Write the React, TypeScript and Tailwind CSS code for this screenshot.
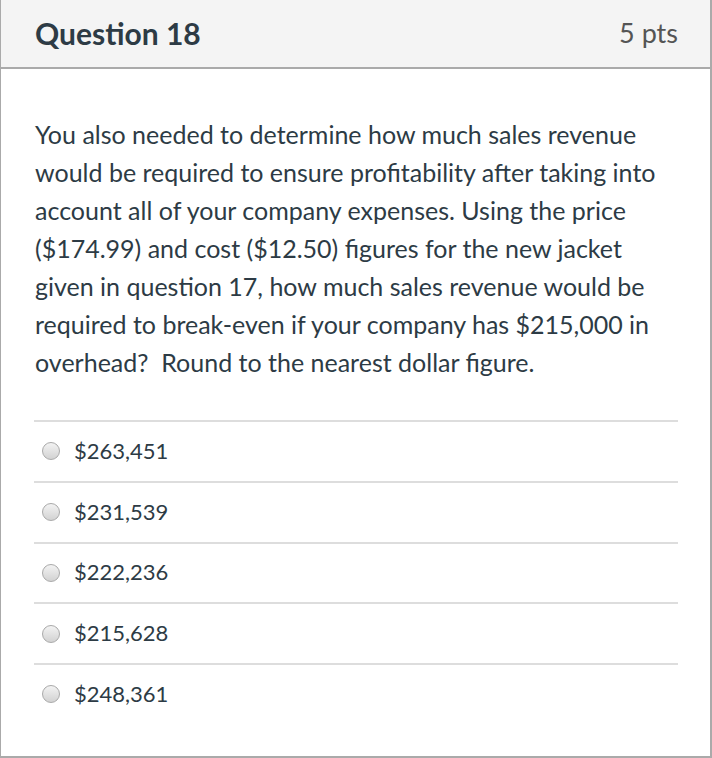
import React from "react";

const answers = ["$263,451", "$231,539", "$222,236", "$215,628", "$248,361"];

function Radio() {
  return (
    <span className="inline-block w-[18px] h-[18px] rounded-full border border-[#a9a9a9] bg-gradient-to-b from-[#f3f3f3] to-[#d2d2d2] shrink-0" />
  );
}

export default function App() {
  return (
    <div className="w-[712px] h-[758px] bg-white" style={{ fontFamily: "Lato, 'Open Sans', sans-serif" }}>
      <div className="w-[712px] h-[758px] border-l border-r-2 border-b-2 border-[#aaaaaa] flex flex-col">
        <div className="h-[69px] bg-[#f4f4f4] border-b-2 border-[#aaaaaa] flex items-center justify-between pl-[34px] pr-[32px] shrink-0">
          <div className="text-[30px] font-bold text-[#2d3b45] leading-none pb-[2px]">Question 18</div>
          <div className="text-[27px] text-[#555555] leading-none pb-[2px]">5 pts</div>
        </div>
        <div className="pl-[34px] pr-[32px] pt-[46px]">
          <p className="text-[25px] leading-[38px] text-[#2d3b45]">
            You also needed to determine how much sales revenue would be required to ensure profitability after taking into account all of your company expenses. Using the price ($174.99) and cost ($12.50) figures for the new jacket given in question 17, how much sales revenue would be required to break-even if your company has $215,000 in overhead?&nbsp; Round to the nearest dollar figure.
          </p>
          <div className="mt-[39px] -ml-[1px]">
            {answers.map((a) => (
              <div key={a} className="h-[60.75px] border-t-2 border-[#dddddd] flex items-center pl-[8px] gap-[14px]">
                <Radio />
                <span className="text-[22px] text-[#2d3b45] pb-[2px]">{a}</span>
              </div>
            ))}
          </div>
        </div>
      </div>
    </div>
  );
}
